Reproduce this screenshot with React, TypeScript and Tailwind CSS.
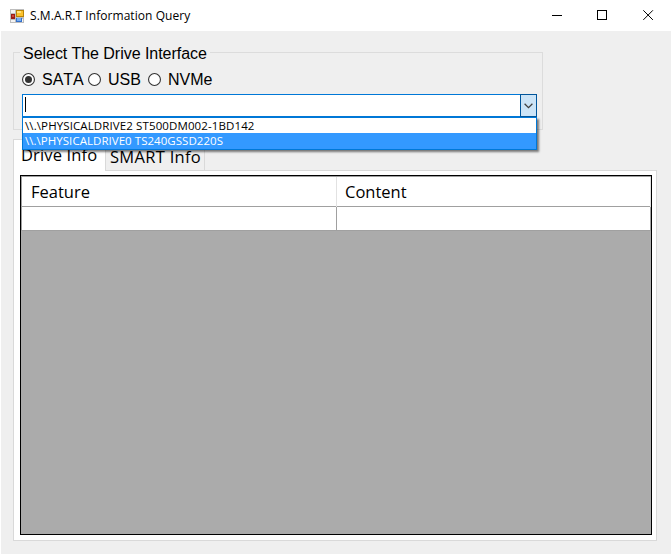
import React from 'react';

const uiFont = "font-['Open_Sans',sans-serif]";
const arial = "font-['Liberation_Sans',Arial,sans-serif]";

function AppIcon() {
  return (
    <svg width="14" height="14" viewBox="0 0 14 14" shapeRendering="crispEdges" className="block">
      <rect x="0" y="0" width="14" height="14" fill="#bdbdbd" />
      <rect x="1" y="1" width="4" height="3" fill="#f3f3f3" />
      <rect x="1" y="11" width="4" height="2" fill="#f3f3f3" />
      <rect x="12" y="10" width="1" height="3" fill="#f3f3f3" />
      <rect x="1" y="5" width="4" height="5" fill="#9b1c16" />
      <rect x="2" y="6" width="2" height="2" fill="#cf4337" />
      <rect x="6" y="1" width="8" height="7" fill="#b98408" />
      <rect x="7" y="2" width="6" height="5" fill="#fbc22d" />
      <rect x="7" y="2" width="4" height="2" fill="#ffe37d" />
      <rect x="6" y="9" width="6" height="4" fill="#3470ca" />
      <rect x="7" y="9" width="4" height="3" fill="#78adf0" />
    </svg>
  );
}

function Radio({ checked = false }: { checked?: boolean }) {
  return (
    <svg width="13" height="13" viewBox="0 0 13 13" className="-mt-[2px] block shrink-0">
      <circle cx="6.5" cy="6.5" r="5.95" fill="#fff" stroke="#333" strokeWidth="1.1" />
      {checked && <circle cx="6.5" cy="6.5" r="3.5" fill="#333" />}
    </svg>
  );
}

function TitleBar() {
  return (
    <header className="flex h-[31px] shrink-0 items-center bg-white pl-[9px]">
      <AppIcon />
      <h1 className={`${uiFont} ml-[6px] w-[514px] whitespace-nowrap text-[12px] leading-[16px] font-normal tracking-[0.06px]`}>
        S.M.A.R.T Information Query
      </h1>
      <svg width="106" height="12" viewBox="0 0 106 12" fill="none" stroke="#000" className="-mt-px ml-[7px] block">
        <path d="M1 6.5h10" />
        <rect x="46.5" y="1.5" width="9" height="9" />
        <path d="M92.3 1.3l9.6 9.6M101.9 1.3l-9.6 9.6" />
      </svg>
    </header>
  );
}

function DriveCombo() {
  return (
    <div className="relative h-[23px] w-[515px]">
      <div className="flex h-full border border-[#0078d7] bg-white">
        <div className="ml-[2px] mt-[2px] h-[15px] w-px bg-black" />
        <div className="-my-px -mr-px ml-auto flex w-[17px] items-center justify-center border border-[#00559b] bg-[#cce4f7]">
          <svg width="9" height="6" viewBox="0 0 9 6" fill="none" stroke="#404040" strokeWidth="1.3" className="mt-px">
            <path d="M.6.8l3.9 3.8L8.4.8" />
          </svg>
        </div>
      </div>
      <ul className={`${uiFont} absolute left-0 top-[23px] z-10 h-[33px] w-[515px] border border-[#0078d7] bg-white text-[11.5px] leading-[15px] shadow-[2px_2px_2px_rgba(0,0,0,0.5)]`}>
        <li className="h-[15px] whitespace-nowrap pl-[2px] tracking-[0.11px]">{'\\\\.\\PHYSICALDRIVE2 ST500DM002-1BD142'}</li>
        <li className="h-4 whitespace-nowrap bg-[#3399ff] pl-[2px] tracking-[0.04px] text-white">{'\\\\.\\PHYSICALDRIVE0 TS240GSSD220S'}</li>
      </ul>
    </div>
  );
}

function InterfaceGroup() {
  return (
    <section className={`${arial} h-[78px] w-[530px] border border-[#dcdcdc] pl-[8px] text-[16px]`}>
      <h2 className="-ml-[2px] -mt-[9px] h-[18px] w-[190px] whitespace-nowrap bg-[#efefef] pl-[3px] leading-[20px] tracking-[-0.03px]">
        Select The Drive Interface
      </h2>
      <div className="mt-[8px] flex h-[20px] items-center leading-[20px] [font-kerning:none]">
        <label className="flex w-[66px] items-center gap-[7px]"><Radio checked /><span>SATA</span></label>
        <label className="flex w-[60px] items-center gap-[7px]"><Radio /><span>USB</span></label>
        <label className="flex items-center gap-[7px]"><Radio /><span>NVMe</span></label>
      </div>
      <div className="mt-[4px]">
        <DriveCombo />
      </div>
    </section>
  );
}

function DriveTable() {
  return (
    <div className="h-[360px] w-[632px] border border-black bg-[#ababab]">
      <div className="h-px bg-[#a0a0a0]" />
      <div className="grid h-[30px] grid-cols-[315px_314px] border-b border-l border-[#a0a0a0] bg-white leading-[30px]">
        <div className="border-r border-[#e2e2e2] pl-[9px]">Feature</div>
        <div className="border-r border-[#e2e2e2] pl-[8px]">Content</div>
      </div>
      <div className="grid h-[24px] grid-cols-[315px_314px] border-b border-l border-[#a0a0a0] bg-white">
        <div className="border-r border-[#a0a0a0]" />
        <div className="border-r border-[#a0a0a0]" />
      </div>
    </div>
  );
}

function InfoTabs() {
  return (
    <section className={`${uiFont} mt-[9px] text-[16.5px]`}>
      <nav className="flex h-[31px] items-end">
        <div className="relative z-[1] -mb-px h-[32px] w-[93px] whitespace-nowrap border border-b-0 border-[#d9d9d9] bg-white pl-[7px] leading-[30px] tracking-[0.15px]">Drive Info</div>
        <div className="h-[29px] w-[99px] whitespace-nowrap border-r border-t border-[#d9d9d9] pl-[4px] leading-[30px] tracking-[0.3px]">SMART Info</div>
      </nav>
      <div className="h-[371px] w-[644px] border border-[#d9d9d9] bg-white pl-[6px] pt-[4px]">
        <DriveTable />
      </div>
    </section>
  );
}

export default function App() {
  return (
    <div className="h-[555px] w-[672px] overflow-hidden bg-white px-px pb-px text-black">
      <main className="flex h-[554px] flex-col bg-[#efefef]">
        <TitleBar />
        <div className="pl-[12px] pt-[21px]">
          <InterfaceGroup />
          <InfoTabs />
        </div>
      </main>
    </div>
  );
}
